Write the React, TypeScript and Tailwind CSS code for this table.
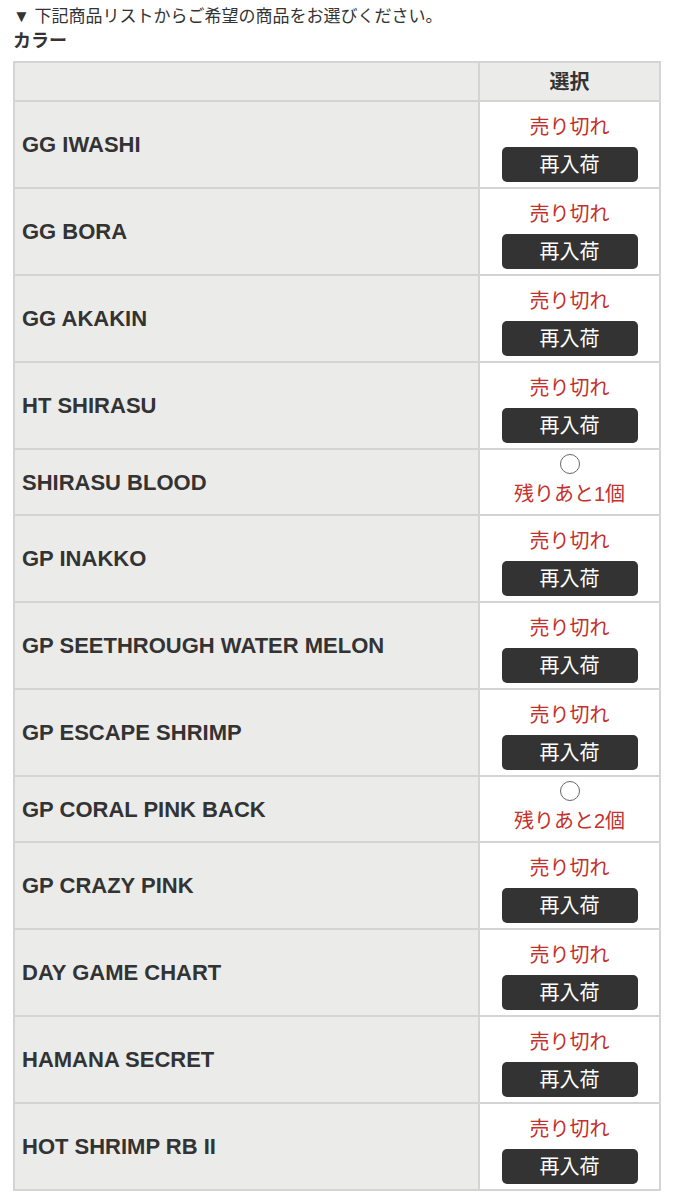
const items: { name: string; stock: number | null }[] = [
  { name: "GG IWASHI", stock: null },
  { name: "GG BORA", stock: null },
  { name: "GG AKAKIN", stock: null },
  { name: "HT SHIRASU", stock: null },
  { name: "SHIRASU BLOOD", stock: 1 },
  { name: "GP INAKKO", stock: null },
  { name: "GP SEETHROUGH WATER MELON", stock: null },
  { name: "GP ESCAPE SHRIMP", stock: null },
  { name: "GP CORAL PINK BACK", stock: 2 },
  { name: "GP CRAZY PINK", stock: null },
  { name: "DAY GAME CHART", stock: null },
  { name: "HAMANA SECRET", stock: null },
  { name: "HOT SHRIMP RB II", stock: null },
];

const jp = { fontFamily: '"Liberation Sans", "Noto Sans CJK JP", sans-serif' };

export default function App() {
  return (
    <div className="min-h-[1200px] bg-white text-[#333]" style={jp}>
      <p className="pl-[13px] pt-[5px] text-[17px] leading-[24px]">▼ 下記商品リストからご希望の商品をお選びください。</p>
      <p className="pl-[13px] text-[18px] font-bold leading-[24px]">カラー</p>
      <table className="ml-[13px] mt-[8px] w-[648px] border-collapse border-2 border-[#d4d4d4]">
        <thead>
          <tr className="h-[39px] bg-[#ebebea]">
            <th className="w-[465px] border-2 border-[#d4d4d4]"></th>
            <th className="border-2 border-[#d4d4d4] text-center text-[20px] font-bold">選択</th>
          </tr>
        </thead>
        <tbody>
          {items.map((item) => (
            <tr key={item.name} className={item.stock ? "h-[66px]" : "h-[87px]"}>
              <td className="border-2 border-[#d4d4d4] bg-[#ebebea] pl-[7px] text-[22px] font-bold">{item.name}</td>
              <td className="border-2 border-[#d4d4d4] bg-white text-center align-top">
                {item.stock ? (
                  <div className="flex flex-col items-center pt-[4px]">
                    <span className="block h-[20px] w-[20px] rounded-full border-[1.5px] border-[#666] bg-white"></span>
                    <span className="mt-[6px] text-[20px] leading-[28px] text-[#c4302b]">残りあと{item.stock}個</span>
                  </div>
                ) : (
                  <div className="flex flex-col items-center pt-[11px]">
                    <span className="text-[20px] leading-[28px] text-[#c4302b]">売り切れ</span>
                    <span className="mt-[6px] flex h-[35px] w-[136px] items-center justify-center rounded-[5px] bg-[#333] text-[20px] text-white">再入荷</span>
                  </div>
                )}
              </td>
            </tr>
          ))}
        </tbody>
      </table>
    </div>
  );
}
